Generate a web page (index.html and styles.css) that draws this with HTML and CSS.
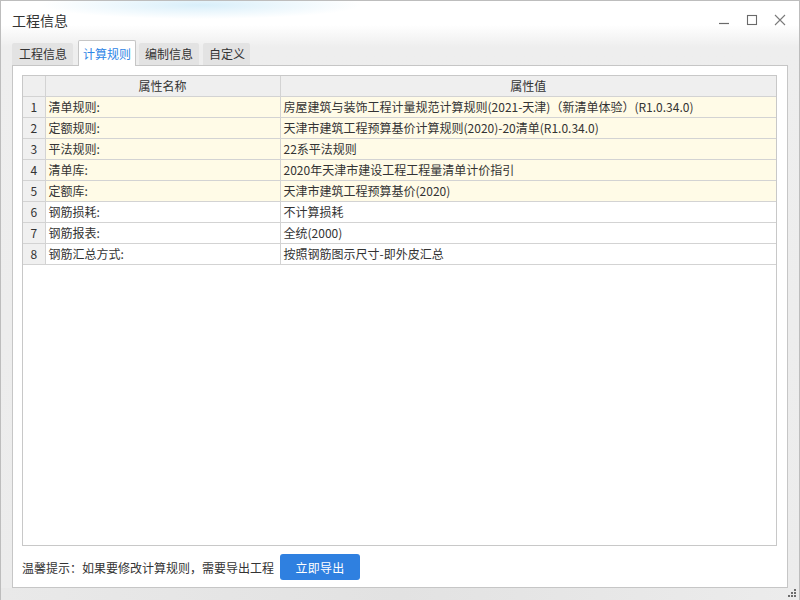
FILE: index.html
```html
<!DOCTYPE html>
<html lang="zh-CN">
<head>
<meta charset="utf-8">
<title>工程信息</title>
<link rel="stylesheet" href="styles.css">
</head>
<body>
<div class="window">
  <div class="titlebar">
    <div class="title">工程信息</div>
    <div class="controls">
      <svg class="ctl" width="12" height="12" viewBox="0 0 12 12"><path d="M1 9.5H11" stroke="#6a6a6a" stroke-width="1.2" fill="none"/></svg>
      <svg class="ctl" width="12" height="12" viewBox="0 0 12 12"><rect x="1.5" y="1.5" width="9" height="9" stroke="#6a6a6a" stroke-width="1.1" fill="none"/></svg>
      <svg class="ctl" width="12" height="12" viewBox="0 0 12 12"><path d="M1 1L11 11M11 1L1 11" stroke="#7a7a7a" stroke-width="1.1" fill="none"/></svg>
    </div>
  </div>
  <div class="tabs">
    <div class="tab t1">工程信息</div>
    <div class="tab active">计算规则</div>
    <div class="tab t3">编制信息</div>
    <div class="tab t4">自定义</div>
  </div>
  <div class="panel">
    <div class="grid-box">
      <table class="grid">
        <colgroup><col class="c-num"><col class="c-name"><col></colgroup>
        <thead>
          <tr><th></th><th>属性名称</th><th>属性值</th></tr>
        </thead>
        <tbody>
          <tr class="hl"><td class="num">1</td><td>清单规则:</td><td>房屋建筑与装饰工程计量规范计算规则(2021-天津)（新清单体验）(R1.0.34.0)</td></tr>
          <tr class="hl"><td class="num">2</td><td>定额规则:</td><td>天津市建筑工程预算基价计算规则(2020)-20清单(R1.0.34.0)</td></tr>
          <tr class="hl"><td class="num">3</td><td>平法规则:</td><td>22系平法规则</td></tr>
          <tr class="hl"><td class="num">4</td><td>清单库:</td><td>2020年天津市建设工程工程量清单计价指引</td></tr>
          <tr class="hl"><td class="num">5</td><td>定额库:</td><td>天津市建筑工程预算基价(2020)</td></tr>
          <tr><td class="num">6</td><td>钢筋损耗:</td><td>不计算损耗</td></tr>
          <tr><td class="num">7</td><td>钢筋报表:</td><td>全统(2000)</td></tr>
          <tr><td class="num">8</td><td>钢筋汇总方式:</td><td>按照钢筋图示尺寸-即外皮汇总</td></tr>
        </tbody>
      </table>
    </div>
    <div class="footer">
      <span class="hint">温馨提示：如果要修改计算规则，需要导出工程</span>
      <button class="btn">立即导出</button>
    </div>
  </div>
  <div class="statusbar">
    <svg class="grip" width="10" height="10" viewBox="0 0 10 10">
      <rect x="7" y="1" width="2" height="2" fill="#6d6d6d"/>
      <rect x="4" y="4" width="2" height="2" fill="#6d6d6d"/>
      <rect x="7" y="4" width="2" height="2" fill="#6d6d6d"/>
      <rect x="1" y="7" width="2" height="2" fill="#6d6d6d"/>
      <rect x="4" y="7" width="2" height="2" fill="#6d6d6d"/>
      <rect x="7" y="7" width="2" height="2" fill="#6d6d6d"/>
    </svg>
  </div>
</div>
</body>
</html>
```

FILE: styles.css
```css
* { box-sizing: border-box; }
html, body { margin: 0; padding: 0; }
body {
  width: 800px;
  height: 600px;
  font-family: "Noto Sans CJK SC", "Noto Sans", sans-serif;
  color: #333;
  overflow: hidden;
}
.window {
  width: 800px;
  height: 600px;
  border: 1px solid #bdbdbd;
  display: flex;
  flex-direction: column;
  background:
    radial-gradient(ellipse 160px 14px at 200px 4px, rgba(200, 232, 248, 0.7), rgba(255,255,255,0)),
    linear-gradient(to bottom, #ffffff 0px, #ffffff 24px, #eeeeee 46px, #ececec 100%);
}
.titlebar {
  height: 39px;
  display: flex;
  align-items: flex-start;
  justify-content: space-between;
  flex: none;
}
.title {
  font-size: 14px;
  line-height: 20px;
  margin: 9px 0 0 11px;
  color: #333;
}
.controls {
  display: flex;
  gap: 16px;
  margin: 13px 13px 0 0;
}
.ctl { display: block; }
.tabs {
  display: flex;
  align-items: flex-end;
  height: 25px;
  padding-left: 11px;
  flex: none;
  position: relative;
  z-index: 2;
}
.tab {
  height: 22px;
  line-height: 22px;
  font-size: 12px;
  background: #e3e3e3;
  color: #333;
  border-radius: 2px 2px 0 0;
  padding: 0 6px;
  white-space: nowrap;
}
.t1 { width: 61px; padding: 0 0 0 7px; }
.tab.active {
  margin-left: 5px;
  width: 58px;
  height: 26px;
  line-height: 25px;
  padding: 0 0 0 4px;
  background: #fff;
  color: #2f86e6;
  border: 1px solid #c6c6c6;
  border-bottom: none;
  margin-bottom: -1px;
}
.t3 { margin-left: 3px; width: 60px; }
.t4 { margin-left: 4px; width: 47px; padding: 0 0 0 6px; }
.panel {
  margin: 0 11px 0 11px;
  height: 523px;
  flex: none;
  background: #fff;
  border: 1px solid #c6c6c6;
  padding: 9px 10px 0 9px;
  display: flex;
  flex-direction: column;
}
.grid-box {
  height: 471px;
  border: 1px solid #c8c8c8;
  background: #fff;
}
.grid {
  width: 100%;
  border-collapse: collapse;
  table-layout: fixed;
  font-size: 12px;
}
.c-num { width: 22px; }
.c-name { width: 235px; }
.grid th {
  height: 20px;
  background: #efefef;
  font-weight: normal;
  text-align: center;
  border-right: 1px solid #d3d3d3;
  border-bottom: 1px solid #d3d3d3;
  padding: 0;
  line-height: 18px;
  color: #333;
}
.grid td {
  height: 21px;
  padding: 0 0 0 3px;
  border-right: 1px solid #d3d3d3;
  border-bottom: 1px solid #d3d3d3;
  white-space: nowrap;
  overflow: hidden;
  line-height: 20px;
}
.grid th:last-child, .grid td:last-child { border-right: none; }
.grid td.num {
  background: #f0f0f0;
  text-align: center;
  padding: 0;
}
.grid tr.hl td { background: #fffbe7; }
.grid tr.hl td.num { background: #f0f0f0; }
.footer {
  display: flex;
  align-items: center;
  height: 41px;
  padding-top: 1px;
}
.hint {
  font-size: 12px;
  width: 258px;
}
.btn {
  width: 80px;
  height: 26px;
  border: none;
  border-radius: 3px;
  background: #2f80e0;
  color: #fff;
  font-family: inherit;
  font-size: 12px;
  padding: 0;
  letter-spacing: 0.3px;
}
.statusbar {
  flex: 1;
  display: flex;
  justify-content: flex-end;
  align-items: flex-end;
  background: linear-gradient(to right, #e9e9e9, #e2e2e2 50%, #ececec);
}
.grip { display: block; margin: 0 2px 2px 0; }
```
